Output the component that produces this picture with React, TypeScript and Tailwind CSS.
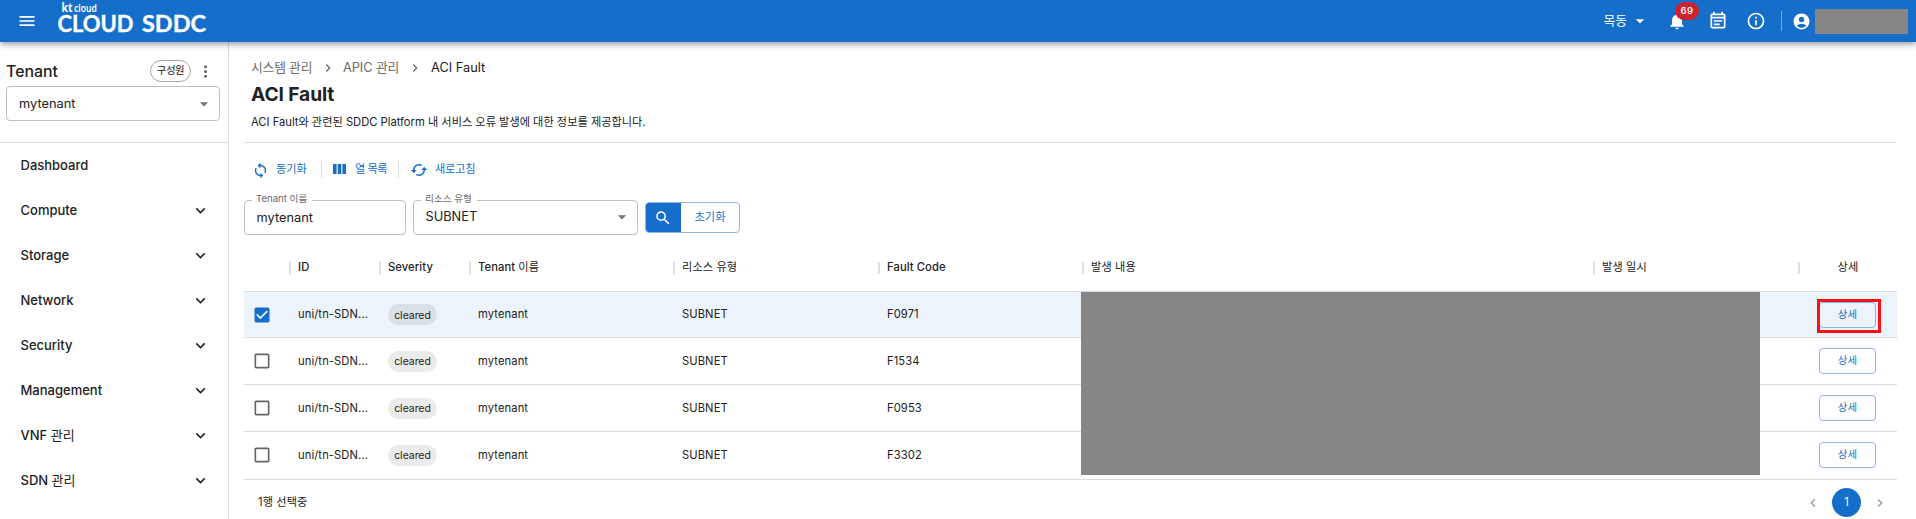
import { MdMenu, MdNotifications, MdOutlineEventNote, MdInfoOutline, MdAccountCircle, MdArrowDropDown, MdMoreVert, MdExpandMore, MdNavigateNext, MdNavigateBefore, MdSync, MdCached, MdSearch, MdCheckBox, MdCheckBoxOutlineBlank } from "react-icons/md";
import type { ReactNode } from "react";

const menu = ["Dashboard", "Compute", "Storage", "Network", "Security", "Management", "VNF 관리", "SDN 관리"];

const rows = [
  { code: "F0971", selected: true, height: "h-[46px]" },
  { code: "F1534", selected: false, height: "h-[47px]" },
  { code: "F0953", selected: false, height: "h-[47px]" },
  { code: "F3302", selected: false, height: "h-[48px] pb-px" },
];

const headers = ["", "ID", "Severity", "Tenant 이름", "리소스 유형", "Fault Code", "발생 내용", "발생 일시"];

const columns = "grid grid-cols-[46px_90px_90px_204px_205px_204px_511px_205px_98px]";

// Latin text keeps the parent's weight; Hangul runs are set in regular weight.
function Label({ text }: { text: string }) {
  return (
    <span className="whitespace-pre">
      {text.split(/([가-힣][가-힣 ]*)/).map((part, i) => (i % 2 ? <span key={i} className="font-normal">{part}</span> : part))}
    </span>
  );
}

function Header() {
  return (
    <header className="relative z-10 flex h-[42px] shrink-0 items-center bg-[#146eca] text-white shadow-[0_2px_4px_-1px_rgba(0,0,0,0.2),0_4px_5px_0_rgba(0,0,0,0.14),0_1px_10px_0_rgba(0,0,0,0.12)]">
      <MdMenu className="ml-[17px] size-5" />
      <svg className="ml-[18px] h-[42px] w-[160px]" viewBox="0 0 160 42" fill="white">
        <text x="6.5" y="11.7" fontFamily="Noto Sans" fontWeight="700" fontSize="11.5" textLength="11" lengthAdjust="spacingAndGlyphs">kt</text>
        <text x="19" y="11.7" fontFamily="Noto Sans" fontWeight="600" fontSize="10" textLength="23" lengthAdjust="spacingAndGlyphs">cloud</text>
        <text x="2.5" y="31.7" fontFamily="Lato" fontWeight="700" fontSize="22" stroke="white" strokeWidth="0.35" textLength="76" lengthAdjust="spacingAndGlyphs">CLOUD</text>
        <text x="87" y="31.7" fontFamily="Lato" fontWeight="700" fontSize="22" stroke="white" strokeWidth="0.35" textLength="64" lengthAdjust="spacingAndGlyphs">SDDC</text>
      </svg>
      <div className="ml-auto flex h-full items-center">
        <span className="text-[12.8px]">목동</span>
        <MdArrowDropDown className="ml-[3px] size-5" />
        <div className="relative ml-[17px] size-5">
          <MdNotifications className="size-5" />
          <span className="absolute -top-[9px] left-[8px] flex h-[18px] w-6 items-center justify-center rounded-full bg-[#cb242f] text-[9.6px] font-medium tracking-[0.4px]">69</span>
        </div>
        <MdOutlineEventNote className="ml-[21px] size-5" />
        <MdInfoOutline className="ml-[18px] size-5" />
        <div className="ml-[15px] h-5 w-px bg-white/40" />
        <MdAccountCircle className="ml-[10px] size-[19px]" />
        <div className="mr-2 ml-[4px] h-[25px] w-[93px] bg-[#868686]" />
      </div>
    </header>
  );
}

function Sidebar() {
  return (
    <aside className="flex w-[229px] shrink-0 flex-col border-r border-[#dcdcdc]">
      <div className="h-[101px] shrink-0 border-b border-[#dcdcdc] pl-1.5">
        <div className="mt-[18px] flex h-[22px] items-center">
          <h2 className="pt-px text-[15.9px] font-medium">Tenant</h2>
          <span className="ml-auto flex h-[22px] w-[41px] items-center justify-center rounded-full border border-[#a8a8a8] text-[10.4px] tracking-[-0.4px]">구성원</span>
          <MdMoreVert className="mr-[13px] ml-[5px] size-[19px] text-[#6b6b6b]" />
        </div>
        <div className="mt-[4px] flex h-[35px] w-[214px] items-center justify-between rounded border border-[#c0c0c0] pr-[5px] pl-3 text-[12.8px]">
          mytenant
          <MdArrowDropDown className="size-5 text-[#757575]" />
        </div>
      </div>
      <nav>
        {menu.map((item, i) => (
          <div key={item} className="flex h-[45px] items-center justify-between pr-[18px] pl-[20.5px] text-[13px] font-medium">
            <Label text={item} />
            {i > 0 && <MdExpandMore className="size-[19px]" />}
          </div>
        ))}
      </nav>
    </aside>
  );
}

function Field({ label, value, className, children }: { label: string; value: string; className: string; children?: ReactNode }) {
  return (
    <div className={`relative flex h-[35px] items-center justify-between rounded border border-[#c0c0c0] pr-[5px] text-[12.8px] ${className}`}>
      <span className="absolute -top-[9px] left-[7px] bg-white pr-[5px] pl-1 text-[9.6px] leading-[14px] text-[#6b6b6b]">{label}</span>
      {value}
      {children}
    </div>
  );
}

function Toolbar() {
  return (
    <div className="mt-[16px] flex h-5 items-center pl-2 text-[11.2px] text-[#146eca]">
      <MdSync className="mt-0.5 size-[17px]" />
      <span className="ml-[7px] w-[45px]">동기화</span>
      <div className="h-[17px] w-px bg-[#dcdcdc]" />
      <svg className="ml-[11px] h-[10px] w-[13px]" viewBox="0 0 13 10" fill="currentColor">
        <rect width="3.6" height="10" rx=".6" /><rect x="4.7" width="3.6" height="10" rx=".6" /><rect x="9.4" width="3.6" height="10" rx=".6" />
      </svg>
      <span className="ml-[9px] w-[43px] tracking-[-0.5px] whitespace-nowrap">열 목록</span>
      <div className="h-[17px] w-px bg-[#dcdcdc]" />
      <MdCached className="mt-0.5 ml-[11px] size-[18px]" />
      <span className="ml-[7px] tracking-[-0.2px]">새로고침</span>
    </div>
  );
}

function FaultTable() {
  return (
    <div className="relative mt-[9px] w-[1653px] text-[11.2px] tracking-[0.1px]">
      <div className={`${columns} h-[48px] items-center border-b border-[#dcdcdc] font-medium`}>
        {headers.map((h, i) => (
          <div key={i} className={`relative left-px flex h-3 items-center border-r-2 border-[#e0e0e0] whitespace-nowrap ${i > 0 ? "pl-[7px]" : ""}`}><Label text={h} /></div>
        ))}
        <div className="text-center"><Label text="상세" /></div>
      </div>
      {rows.map((r) => (
        <div key={r.code} className={`${columns} ${r.height} items-center border-b border-[#dcdcdc] ${r.selected ? "bg-[#ecf3fb]" : ""}`}>
          {r.selected ? <MdCheckBox className="ml-2 size-5 text-[#146eca]" /> : <MdCheckBoxOutlineBlank className="ml-2 size-5 text-[#666]" />}
          <div className="pl-2">uni/tn-SDN...</div>
          <div className="pl-2"><span className="flex h-[21px] w-[49px] items-center justify-center rounded-full bg-black/8 pt-0.5 text-[10.4px] tracking-normal">cleared</span></div>
          <div className="pl-2">mytenant</div>
          <div className="pl-2">SUBNET</div>
          <div className="pl-2">{r.code}</div>
          <div />
          <div />
          <div className="relative flex justify-center pr-px">
            <button className="h-[26px] w-[57px] rounded border border-[#89b6e5] text-[10.4px] text-[#146eca]">상세</button>
            {r.selected && <div className="absolute -top-[3px] left-[18px] h-[34px] w-16 border-3 border-[#fb1016]" />}
          </div>
        </div>
      ))}
      <div className="absolute top-[48px] left-[837px] h-[183px] w-[679px] bg-[#868686]" />
      <div className="flex h-[39px] items-center pt-[6px] pr-[9px] pl-[14px] text-[11.2px]">
        1행 선택중
        <MdNavigateBefore className="ml-auto size-4 text-[#999]" />
        <span className="mx-[11px] flex size-[29px] items-center justify-center rounded-full bg-[#146eca] text-white">1</span>
        <MdNavigateNext className="size-4 text-[#999]" />
      </div>
    </div>
  );
}

export default function App() {
  return (
    <div className="flex h-[519px] flex-col overflow-hidden bg-white font-[Inter,'Noto_Sans_CJK_KR',sans-serif] text-[#222]">
      <Header />
      <div className="flex min-h-0 flex-1">
        <Sidebar />
        <main className="flex-1 pl-[15px]">
          <div className="mr-5 h-[101px] border-b border-[#dcdcdc] pt-[16px] pl-[7px]">
            <div className="flex h-5 items-center text-[12.8px] text-[#6b6b6b]">
              <span className="w-[62px] tracking-[-0.2px] whitespace-nowrap">시스템 관리</span>
              <MdNavigateNext className="mx-[7px] size-4" />
              <span className="w-[57px] tracking-[-0.1px] whitespace-nowrap">APIC 관리</span>
              <MdNavigateNext className="mx-[7px] size-4" />
              <span className="ml-px text-[#222]">ACI Fault</span>
            </div>
            <h1 className="mt-[3px] text-[19.2px] leading-[26px] font-bold tracking-[-0.1px]">ACI Fault</h1>
            <p className="mt-[7px] text-[11.2px] leading-[16px]">ACI Fault와 관련된 SDDC Platform 내 서비스 오류 발생에 대한 정보를 제공합니다.</p>
          </div>
          <Toolbar />
          <div className="mt-[21px] flex items-center">
            <Field label="Tenant 이름" value="mytenant" className="w-[162px] pl-[11.5px]" />
            <Field label="리소스 유형" value="SUBNET" className="ml-[7px] w-[225px] pb-px pl-[11.5px]">
              <MdArrowDropDown className="size-5 text-[#757575]" />
            </Field>
            <div className="ml-[7px] flex h-[31px] w-[95px] overflow-hidden rounded border border-[#89b6e5] text-[11.2px] text-[#146eca]">
              <div className="-my-px -ml-px flex w-[36px] items-center justify-center bg-[#146eca] text-white"><MdSearch className="size-[18px]" /></div>
              <div className="flex flex-1 items-center justify-center">초기화</div>
            </div>
          </div>
          <FaultTable />
        </main>
      </div>
    </div>
  );
}
